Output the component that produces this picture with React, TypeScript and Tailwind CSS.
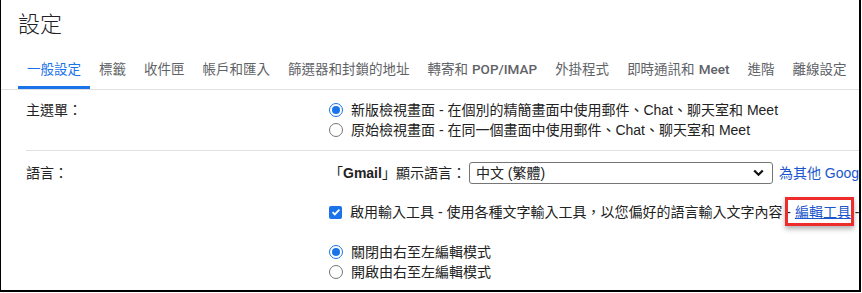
import React from 'react';

const tabs = [
  { zh: '一般設定', active: true },
  { zh: '標籤' },
  { zh: '收件匣' },
  { zh: '帳戶和匯入' },
  { zh: '篩選器和封鎖的地址' },
  { zh: '轉寄和', en: 'POP/IMAP' },
  { zh: '外掛程式' },
  { zh: '即時通訊和', en: 'Meet' },
  { zh: '進階' },
  { zh: '離線設定' },
];

function Radio({ checked }: { checked?: boolean }) {
  return (
    <span
      className={`flex h-[14px] w-[14px] shrink-0 items-center justify-center rounded-full border-[1.5px] ${
        checked ? 'border-[#1a73e8]' : 'border-[#767676]'
      }`}
    >
      {checked && <span className="h-[8px] w-[8px] rounded-full bg-[#1a73e8]" />}
    </span>
  );
}

function Checkbox() {
  return (
    <span className="flex h-[13px] w-[13px] shrink-0 items-center justify-center rounded-[2px] bg-[#1a73e8]">
      <svg width="10" height="10" viewBox="0 0 10 10">
        <path d="M1.6 5.2l2.2 2.2 4.6-4.8" fill="none" stroke="#fff" strokeWidth="1.8" />
      </svg>
    </span>
  );
}

export default function App() {
  return (
    <div
      className="h-[292px] w-[861px] overflow-hidden border-b-2 border-l border-r-2 border-black bg-white text-[#222]"
      style={{ fontFamily: '"Liberation Sans", "Noto Sans CJK TC", sans-serif' }}
    >
      {/* Title */}
      <div
        className="h-[50px] pl-[17px] pt-[10px] text-[22px] font-light leading-[30px] text-[#202124]"
        style={{ fontFamily: 'Roboto, "Noto Sans CJK TC", sans-serif' }}
      >
        設定
      </div>

      {/* Tabs */}
      <div
        className="flex border-b border-[#e0e0e0] pl-[17px] text-[13.5px] text-[#5f6368]"
        style={{ fontFamily: 'Roboto, "Noto Sans CJK TC", sans-serif' }}
      >
        {tabs.map((t) => (
          <div
            key={t.zh}
            className={`flex h-[39px] items-center whitespace-nowrap px-[9px] ${
              t.active ? 'text-[#1a73e8] shadow-[inset_0_-3px_0_#1a73e8]' : ''
            }`}
          >
            <span>
              {t.zh}
              {t.en && <span className="ml-[4px] font-medium">{t.en}</span>}
            </span>
          </div>
        ))}
      </div>

      {/* Settings */}
      <div className="pl-[25px] text-[14px]">
        {/* 主選單 */}
        <div className="flex border-b border-[#e0e0e0] pb-[10px] pt-[10px]">
          <div className="w-[303px] shrink-0 leading-[20px]">主選單：</div>
          <div className="flex flex-col leading-[20px]">
            <label className="flex items-center gap-[8px] whitespace-nowrap">
              <Radio checked />
              <span>新版檢視畫面 - 在個別的精簡畫面中使用郵件、Chat、聊天室和 Meet</span>
            </label>
            <label className="flex items-center gap-[8px] whitespace-nowrap">
              <Radio />
              <span>原始檢視畫面 - 在同一個畫面中使用郵件、Chat、聊天室和 Meet</span>
            </label>
          </div>
        </div>

        {/* 語言 */}
        <div className="flex pt-[11px]">
          <div className="w-[303px] shrink-0 leading-[22px]">語言：</div>
          <div className="flex flex-col">
            <div className="flex h-[22px] items-center whitespace-nowrap">
              <span>
                「<b>Gmail</b>」顯示語言：
              </span>
              <div className="ml-[3px] flex h-[22px] w-[304px] shrink-0 items-center justify-between rounded-[3px] border border-[#767676] pl-[6px] pr-[8px]">
                <span>中文 (繁體)</span>
                <svg width="11" height="8" viewBox="0 0 11 8">
                  <path d="M1.2 1.5l4.3 4.3 4.3-4.3" fill="none" stroke="#111" strokeWidth="2.2" />
                </svg>
              </div>
              <span className="ml-[6px] text-[#1a55cc]">為其他 Google 產品變更語言設定</span>
            </div>

            <label className="mt-[18px] flex items-center gap-[8px] whitespace-nowrap leading-[20px]">
              <Checkbox />
              <span>
                啟用輸入工具 - 使用各種文字輸入工具，以您偏好的語言輸入文字內容 -{' '}
                <span className="relative text-[#1a55cc] underline">
                  編輯工具
                  <span className="absolute -bottom-[6px] -left-[10px] -right-[3px] -top-[7px] border-[3px] border-[#ee2c2c] shadow-[0_3px_5px_rgba(0,0,0,0.3)]" />
                </span>{' '}
                - 瞭解詳情
              </span>
            </label>

            <div className="mt-[20px] flex flex-col leading-[20px]">
              <label className="flex items-center gap-[8px] whitespace-nowrap">
                <Radio checked />
                <span>關閉由右至左編輯模式</span>
              </label>
              <label className="flex items-center gap-[8px] whitespace-nowrap">
                <Radio />
                <span>開啟由右至左編輯模式</span>
              </label>
            </div>
          </div>
        </div>
      </div>
    </div>
  );
}
